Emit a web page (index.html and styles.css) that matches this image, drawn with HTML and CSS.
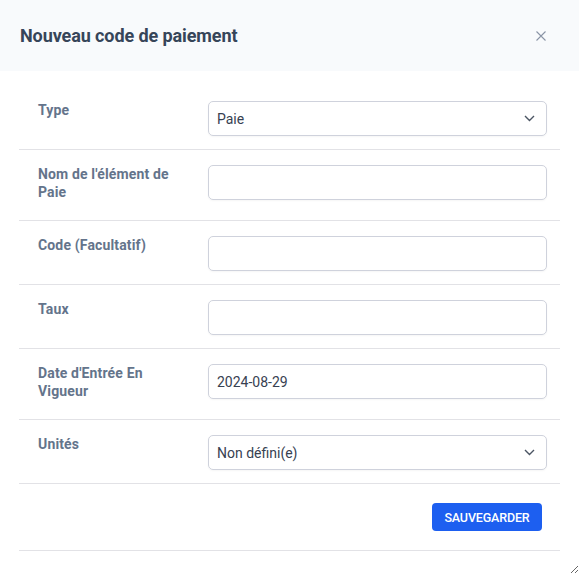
FILE: index.html
```html
<!DOCTYPE html>
<html lang="fr">
<head>
<meta charset="utf-8">
<title>Nouveau code de paiement</title>
<link rel="stylesheet" href="styles.css">
</head>
<body>
<div class="modal">
  <header class="modal-header">
    <h1 class="modal-title">Nouveau code de paiement</h1>
    <button class="close" type="button" aria-label="Fermer">
      <svg width="10" height="10" viewBox="0 0 10 10"><path d="M0.5 0.5 L9.5 9.5 M9.5 0.5 L0.5 9.5" stroke="#8a94a6" stroke-width="1.1" fill="none"/></svg>
    </button>
  </header>
  <div class="modal-body">
    <div class="row">
      <label class="label">Type</label>
      <div class="field select">
        <span class="value">Paie</span>
        <svg class="chev" width="11" height="7" viewBox="0 0 11 7"><path d="M1 1 L5.5 5.5 L10 1" stroke="#4b5563" stroke-width="1.4" fill="none"/></svg>
      </div>
    </div>
    <div class="row">
      <label class="label">Nom de l'élément de Paie</label>
      <div class="field"></div>
    </div>
    <div class="row">
      <label class="label">Code (Facultatif)</label>
      <div class="field"></div>
    </div>
    <div class="row">
      <label class="label">Taux</label>
      <div class="field"></div>
    </div>
    <div class="row">
      <label class="label">Date d'Entrée En Vigueur</label>
      <div class="field"><span class="value">2024-08-29</span></div>
    </div>
    <div class="row">
      <label class="label">Unités</label>
      <div class="field select">
        <span class="value">Non défini(e)</span>
        <svg class="chev" width="11" height="7" viewBox="0 0 11 7"><path d="M1 1 L5.5 5.5 L10 1" stroke="#4b5563" stroke-width="1.4" fill="none"/></svg>
      </div>
    </div>
    <div class="footer">
      <button class="save" type="button">SAUVEGARDER</button>
    </div>
  </div>
</div>
</body>
</html>
```
FILE: styles.css
```css
* { box-sizing: border-box; }
html, body { margin: 0; padding: 0; }
body {
  font-family: Roboto, "Liberation Sans", Arial, sans-serif;
  background: #ffffff;
}
.modal {
  width: 579px;
  height: 574px;
  overflow: auto;
  resize: both;
  background: #ffffff;
}
.modal-header {
  height: 71px;
  background: #f8fafc;
  display: flex;
  align-items: center;
  justify-content: space-between;
  padding: 0 32px 0 20px;
}
.modal-title {
  margin: 0;
  font-size: 18px;
  font-weight: 700;
  color: #364559;
  letter-spacing: -0.1px;
}
.close {
  border: 0;
  background: none;
  padding: 0;
  width: 12px;
  height: 12px;
  display: flex;
  align-items: center;
  justify-content: center;
  cursor: pointer;
}
.modal-body {
  padding: 15px 19px 0 19px;
}
.row {
  display: grid;
  grid-template-columns: 189px 339px;
  padding: 15px 0 13px 0;
  border-bottom: 1px solid #e2e2e6;
}
.label {
  padding-left: 19px;
  font-size: 14px;
  font-weight: 700;
  line-height: 18px;
  color: #64748b;
  letter-spacing: 0.15px;
  margin-bottom: 6px;
  padding-right: 16px;
}
.field {
  height: 35px;
  border: 1px solid #cfd2dc;
  border-radius: 5px;
  display: flex;
  align-items: center;
  padding: 0 9px 0 8px;
  font-size: 14px;
  color: #374151;
  box-shadow: 0 1px 2px rgba(0,0,0,0.04);
}
.select { justify-content: space-between; }
.chev { margin-right: 2px; }
.footer {
  display: flex;
  justify-content: flex-end;
  padding: 19px 18px 19px 0;
  border-bottom: 1px solid #e2e2e6;
}
.save {
  height: 28px;
  width: 110px;
  border: 0;
  border-radius: 4px;
  background: #1d5ff0;
  color: #ffffff;
  font-family: Roboto, "Liberation Sans", Arial, sans-serif;
  font-size: 12.5px;
  font-weight: 500;
  letter-spacing: -0.15px;
  padding: 0;
}
```
